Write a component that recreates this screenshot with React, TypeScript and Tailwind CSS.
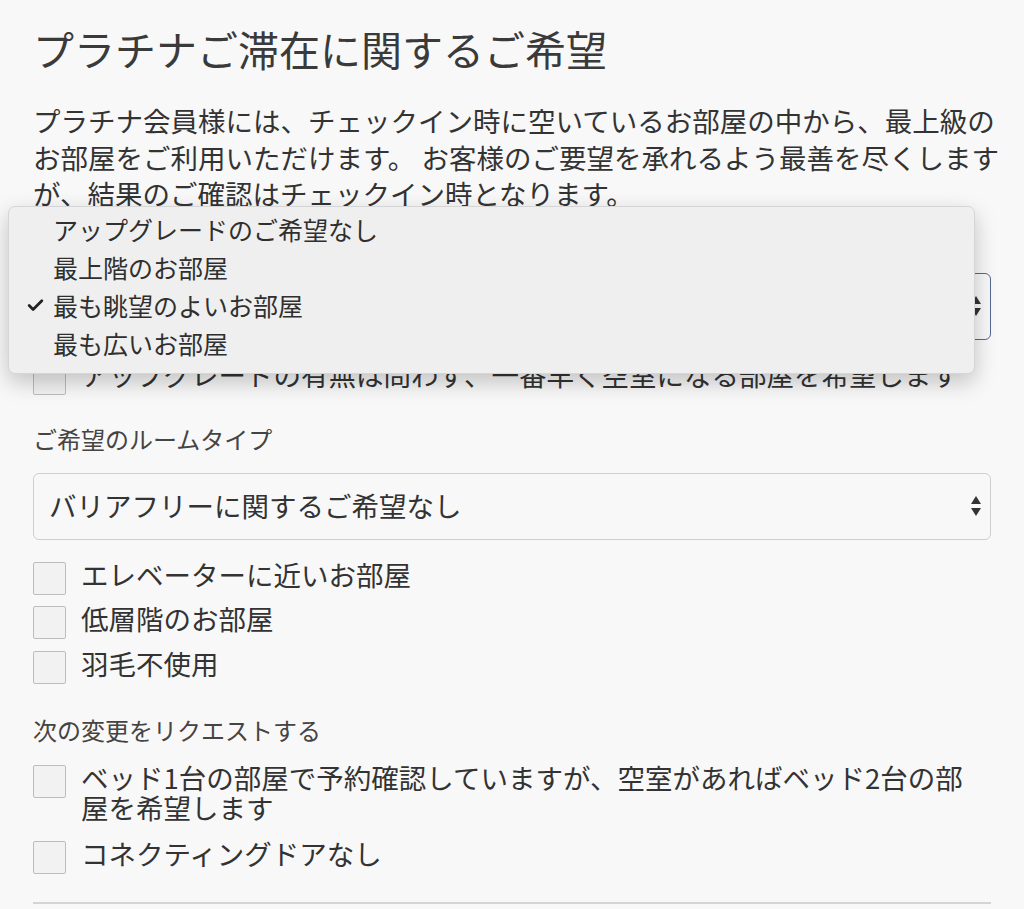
import { Check } from 'lucide-react';

const jp = { fontFamily: '"Noto Sans CJK JP", "Noto Sans", sans-serif' };

const upgradeOptions = [
  'アップグレードのご希望なし',
  '最上階のお部屋',
  '最も眺望のよいお部屋',
  '最も広いお部屋',
];

// up/down chevrons drawn at the right edge of a native-looking select
const SelectArrows = () => (
  <svg width="12" height="22" viewBox="0 0 12 22" className="shrink-0">
    <path d="M6 1 L11 9 L1 9 Z" fill="#333" />
    <path d="M6 21 L11 13 L1 13 Z" fill="#333" />
  </svg>
);

const Checkbox = ({ label }: { label: React.ReactNode }) => (
  <label className="flex items-start gap-[15px] cursor-pointer">
    <span className="mt-[3px] h-[33px] w-[33px] shrink-0 rounded-[2px] border border-[#bdbdbd] bg-[#f2f2f2]" />
    <span className="whitespace-nowrap text-[27.5px] leading-[30px] text-[#333]">{label}</span>
  </label>
);

const FieldLabel = ({ children }: { children: React.ReactNode }) => (
  <div className="text-[24px] leading-[30px] text-[#444]">{children}</div>
);

const App = () => {
  return (
    <div style={jp} className="min-h-screen w-full bg-[#f8f8f8] px-[33px] pt-[22px] text-[#333]">
      <h1 className="text-[41px] leading-[52px] font-normal text-[#3a3a3a]">
        プラチナご滞在に関するご希望
      </h1>
      <p className="mt-[28px] whitespace-nowrap text-[27.5px] leading-[36.5px] text-[#333]">
        プラチナ会員様には、チェックイン時に空いているお部屋の中から、最上級の
        <br />
        お部屋をご利用いただけます。 お客様のご要望を承れるよう最善を尽くします
        <br />
        が、結果のご確認はチェックイン時となります。
      </p>

      {/* upgrade preference, select opened */}
      <div className="relative mt-[-2px]">
        <FieldLabel>ご希望のアップグレード</FieldLabel>
        <div className="mt-[33px] flex h-[67px] items-center justify-between rounded-[6px] border-[1.5px] border-[#55698f] bg-[#f8f8f8] pl-[16px] pr-[8px]">
          <span className="text-[27.5px]">最も眺望のよいお部屋</span>
          <SelectArrows />
        </div>
        <div className="mt-[19px]">
          <Checkbox label="アップグレードの有無は問わず、一番早く空室になる部屋を希望します" />
        </div>

        <div className="absolute left-[-25px] top-[-4px] w-[967px] rounded-[7px] border border-[#d6d6d6] bg-[#efefef] pt-[4px] pb-[10px] shadow-[0_8px_22px_rgba(0,0,0,0.22)]">
          {upgradeOptions.map((opt, i) => (
            <div key={opt} className="flex h-[38px] items-center text-[25px] text-[#2f2f2f]">
              <span className="flex w-[44px] justify-end pr-[8px]">
                {i === 2 && <Check size={19} strokeWidth={3.5} color="#222" />}
              </span>
              {opt}
            </div>
          ))}
        </div>
      </div>

      <div className="mt-[29px]">
        <FieldLabel>ご希望のルームタイプ</FieldLabel>
        <div className="mt-[19px] flex h-[67px] items-center justify-between rounded-[6px] border border-[#cfcfcf] bg-[#f8f8f8] pl-[15px] pr-[8px]">
          <span className="text-[27.5px]">バリアフリーに関するご希望なし</span>
          <SelectArrows />
        </div>
        <div className="mt-[19px] flex flex-col gap-[8.5px]">
          <Checkbox label="エレベーターに近いお部屋" />
          <Checkbox label="低層階のお部屋" />
          <Checkbox label="羽毛不使用" />
        </div>
      </div>

      <div className="mt-[31px]">
        <FieldLabel>次の変更をリクエストする</FieldLabel>
        <div className="mt-[17px] flex flex-col gap-[16px]">
          <Checkbox
            label={
              <>
                ベッド1台の部屋で予約確認していますが、空室があればベッド2台の部
                <br />
                屋を希望します
              </>
            }
          />
          <Checkbox label="コネクティングドアなし" />
        </div>
      </div>

      <div className="mt-[28px] h-[2px] bg-[#d4d4d4]" />
    </div>
  );
};

export default App;
